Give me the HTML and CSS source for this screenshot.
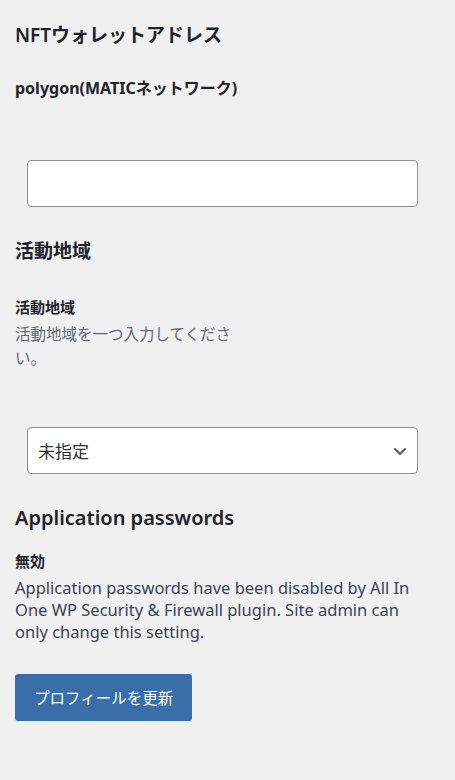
FILE: index.html
```html
<!DOCTYPE html>
<html lang="ja">
<head>
	<meta charset="UTF-8">
	<meta name="viewport" content="width=device-width, initial-scale=1">
	<title>プロフィール</title>
	<link rel="stylesheet" href="styles.css">
</head>
<body>
	<form class="profile">
		<h2 class="section-title first">NFTウォレットアドレス</h2>
		<label class="field-label wide" for="wallet">polygon(MATICネットワーク)</label>
		<div class="field">
			<input class="text-input" id="wallet" type="text">
		</div>

		<h2 class="section-title">活動地域</h2>
		<label class="field-label" for="area">活動地域</label>
		<p class="description">活動地域を一つ入力してください。</p>
		<div class="field select-field">
			<div class="select" id="area">
				<span>未指定</span>
				<svg class="chevron" width="16" height="16" viewBox="0 0 16 16">
					<polyline points="3 6 8 11 13 6" style="fill:none;stroke:#50575e;stroke-width:2;stroke-linecap:round;stroke-linejoin:round"></polyline>
				</svg>
			</div>
		</div>

		<h2 class="section-title latin">Application passwords</h2>
		<div class="field-label small-gap">無効</div>
		<p class="notice">Application passwords have been disabled by All In One WP Security &amp; Firewall plugin. Site admin can only change this setting.</p>

		<button class="button-primary" type="button">プロフィールを更新</button>
	</form>
</body>
</html>
```

FILE: styles.css
```css
* {
	box-sizing: border-box;
}
body {
	background: #f0f0f1;
	color: #1d2327;
	font-family: "Noto Sans", "Noto Sans CJK JP", sans-serif;
	margin: 0;
	padding: 0 15px;
}
.profile {
	display: flex;
	flex-direction: column;
	align-items: flex-start;
}
.section-title {
	font-size: 19px;
	font-weight: 600;
	line-height: 26px;
	margin: 31px 0 0;
}
.section-title.first {
	margin-top: 22px;
}
.section-title.latin {
	font-size: 20px;
}
.field-label {
	font-size: 15px;
	font-weight: 700;
	line-height: 22px;
	margin-top: 32px;
}
.field-label.wide {
	font-size: 16px;
	margin-top: 29px;
}
.field-label.small-gap {
	margin-top: 19px;
}
.field {
	width: 100%;
	padding: 0 22px 0 12px;
	margin-top: 61px;
}
.select-field {
	margin-top: 57px;
}
.text-input, .select {
	display: block;
	width: 100%;
	height: 47px;
	background: #fff;
	border: 1px solid #8c8f94;
	border-radius: 4px;
	margin: 0;
	font: inherit;
}
.select {
	display: flex;
	align-items: center;
	justify-content: space-between;
	padding: 0 9px 0 10px;
	font-size: 17px;
	color: #2c3338;
}
.description {
	color: #646970;
	font-size: 15.5px;
	line-height: 24px;
	width: 228px;
	margin: 4px 0 0;
}
.notice {
	color: #3c434a;
	font-size: 16.5px;
	line-height: 22px;
	max-width: 415px;
	margin: 5px 0 0;
}
.button-primary {
	background: #3a6ea8;
	border: 0;
	border-radius: 3px;
	color: #fff;
	font: inherit;
	font-size: 15.5px;
	height: 47px;
	padding: 0 19px;
	margin-top: 31px;
}
```
